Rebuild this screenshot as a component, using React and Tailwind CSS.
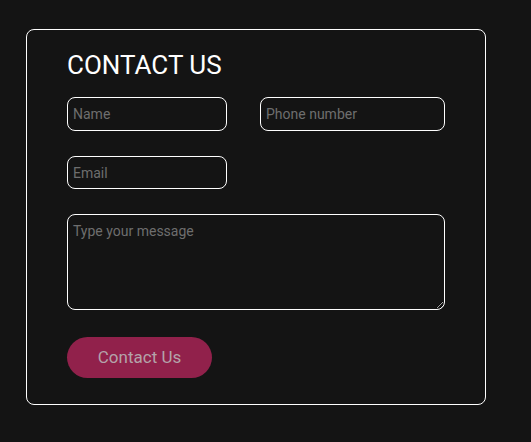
export default function App() {
  return (
    <div className="min-h-[442px] bg-[#141414] pt-[29px] pl-[26px]" style={{ fontFamily: "Roboto, 'Liberation Sans', sans-serif" }}>
      <div className="w-[460px] h-[376px] rounded-lg border border-white pl-[40px] pt-[19px]">
        <h2 className="text-[26px] leading-[32px] text-white font-normal mb-[16px]">CONTACT US</h2>
        <form className="flex flex-col" onSubmit={(e) => e.preventDefault()}>
          <div className="flex gap-[33px]">
            <input
              type="text"
              placeholder="Name"
              className="w-[160px] h-[34px] rounded-lg border border-white bg-transparent px-[5px] text-[14px] text-white placeholder:text-[#6e6e6e] outline-none"
            />
            <input
              type="text"
              placeholder="Phone number"
              className="w-[185px] h-[34px] rounded-lg border border-white bg-transparent px-[5px] text-[14px] text-white placeholder:text-[#6e6e6e] outline-none"
            />
          </div>
          <input
            type="email"
            placeholder="Email"
            className="mt-[25px] w-[160px] h-[33px] rounded-lg border border-white bg-transparent px-[5px] text-[14px] text-white placeholder:text-[#6e6e6e] outline-none"
          />
          <textarea
            placeholder="Type your message"
            className="mt-[25px] w-[378px] h-[96px] rounded-lg border border-white bg-transparent px-[5px] py-[7px] text-[14px] leading-[18px] text-white placeholder:text-[#6e6e6e] outline-none"
          />
          <button
            type="submit"
            className="mt-[27px] w-[145px] h-[41px] rounded-full bg-[#91214b] text-[17px] text-[#b4a3aa]"
          >
            Contact Us
          </button>
        </form>
      </div>
    </div>
  );
}
